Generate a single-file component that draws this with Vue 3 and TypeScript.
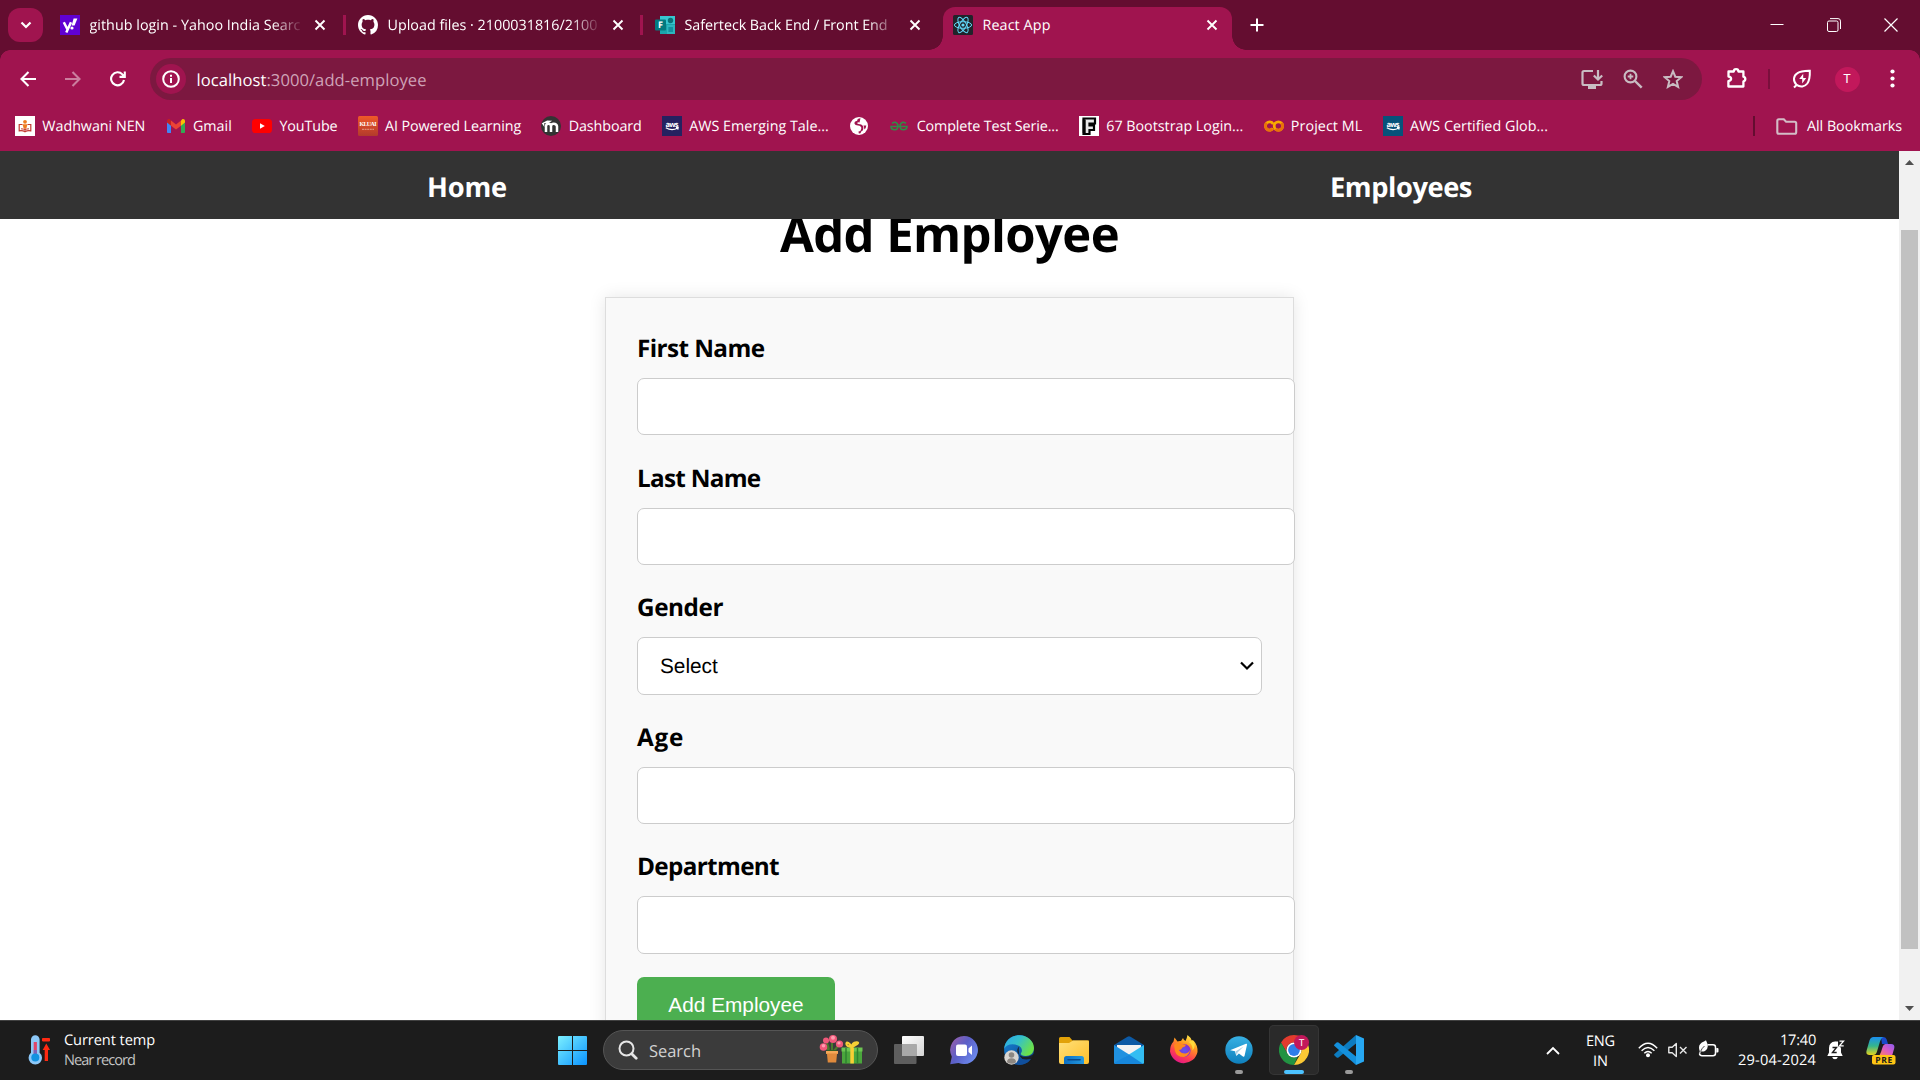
<script setup lang="ts">
import { ref } from 'vue'

interface Bookmark { icon: string; label?: string; width?: number }
interface Field { label: string; width: number; kind: 'text' | 'select' }
interface TaskApp { icon: string; state?: 'open' | 'active' }

// Spreads the glyphs of a label so that it takes exactly the given width.
const vFit = {
  mounted(el: HTMLElement, binding: { value?: number }) {
    if (!binding.value) return
    const natural = el.getBoundingClientRect().width
    const count = (el.textContent ?? '').trim().length
    el.style.letterSpacing = `${(binding.value - natural) / count}px`
  },
}

const gender = ref('')

const tabs = [
  { icon: 'yahoo', title: 'github login - Yahoo India Searc', width: 211 },
  { icon: 'github', title: 'Upload files · 2100031816/2100', width: 210 },
  { icon: 'forms', title: 'Saferteck Back End / Front End', width: 203 },
]

const bookmarks: Bookmark[] = [
  { icon: 'wadhwani', label: 'Wadhwani NEN', width: 103 },
  { icon: 'gmail', label: 'Gmail', width: 39 },
  { icon: 'youtube', label: 'YouTube', width: 58 },
  { icon: 'kluai', label: 'AI Powered Learning', width: 136 },
  { icon: 'moodle', label: 'Dashboard', width: 73 },
  { icon: 'awsNavy', label: 'AWS Emerging Tale...', width: 139.500 },
  { icon: 'globe' },
  { icon: 'gfg', label: 'Complete Test Serie...', width: 142 },
  { icon: 'bootF', label: '67 Bootstrap Login...', width: 137 },
  { icon: 'colab', label: 'Project ML', width: 71.500 },
  { icon: 'awsTeal', label: 'AWS Certified Glob...', width: 138 },
]

const fields: Field[] = [
  { label: 'First Name', width: 127.500, kind: 'text' },
  { label: 'Last Name', width: 123.500, kind: 'text' },
  { label: 'Gender', width: 86, kind: 'select' },
  { label: 'Age', width: 47, kind: 'text' },
  { label: 'Department', width: 142, kind: 'text' },
]

const apps: TaskApp[] = [
  { icon: 'taskview' },
  { icon: 'chat' },
  { icon: 'edge' },
  { icon: 'explorer' },
  { icon: 'mail' },
  { icon: 'firefox' },
  { icon: 'telegram', state: 'open' },
  { icon: 'chrome', state: 'active' },
  { icon: 'vscode', state: 'open' },
]

const aws = (bg: string) => `<rect width="20" height="20" fill="${bg}"/>
  <text x="10" y="10.5" text-anchor="middle" font-family="Open Sans, sans-serif" font-weight="700" font-size="7.5" textLength="13" fill="#fff">aws</text>
  <path d="M3.800 11.800q6 3.400 11.600.4M14 11.600l2.200-.1-.4 2.200" fill="none" stroke="#fff" stroke-width="1.200"/>`

// 20 x 20 site icons
const favicons: Record<string, string> = {
  yahoo: `<rect width="20" height="20" fill="#6001d2"/><path d="M3.800 7.200l3.600 7M11 7.200L6.300 17.500" stroke="#fff" stroke-width="2.500"/><path d="M13.600 3.600h3.800l-2.800 7h-3z" fill="#fff"/><circle cx="12" cy="13" r="1.600" fill="#fff"/>`,
  github: `<path transform="scale(1.25)" fill="#fff" d="M8 0C3.58 0 0 3.58 0 8c0 3.54 2.29 6.53 5.47 7.59.4.07.55-.17.55-.38 0-.19-.01-.82-.01-1.49-2.01.37-2.53-.49-2.69-.94-.09-.23-.48-.94-.82-1.13-.28-.15-.68-.52-.01-.53.63-.01 1.08.58 1.23.82.72 1.21 1.87.87 2.33.66.07-.52.28-.87.51-1.07-1.78-.2-3.64-.89-3.64-3.95 0-.87.31-1.59.82-2.15-.08-.2-.36-1.02.08-2.12 0 0 .67-.21 2.2.82.64-.18 1.32-.27 2-.27s1.36.09 2 .27c1.53-1.04 2.2-.82 2.2-.82.44 1.1.16 1.92.08 2.12.51.56.82 1.27.82 2.15 0 3.07-1.87 3.75-3.65 3.95.29.25.54.73.54 1.48 0 1.07-.01 1.93-.01 2.2 0 .21.15.46.55.38A8.01 8.01 0 0 0 16 8c0-4.42-3.58-8-8-8z"/>`,
  forms: `<path d="M5 1h15v18H5z" fill="#1aa5ab"/><path d="M5 1h15v8H5z" fill="#37c6d0"/><path d="M12 10h8v9h-8z" fill="#2cb6be"/><circle cx="15.5" cy="5.5" r="2.7" fill="#0b7177"/><rect x="13.4" y="12" width="4.6" height="5" fill="#1490a0"/><rect x="0" y="4.5" width="11" height="11" rx="1" fill="#037a7f"/><text x="5.5" y="13.4" text-anchor="middle" font-family="Open Sans, sans-serif" font-weight="700" font-size="9" fill="#fff">F</text>`,
  react: `<rect width="20" height="20" rx="1.5" fill="#20232a"/><g fill="none" stroke="#61dafb" stroke-width="1"><ellipse cx="10" cy="10" rx="8.6" ry="3.3"/><ellipse cx="10" cy="10" rx="8.6" ry="3.3" transform="rotate(60 10 10)"/><ellipse cx="10" cy="10" rx="8.6" ry="3.3" transform="rotate(120 10 10)"/></g><circle cx="10" cy="10" r="1.6" fill="#61dafb"/>`,
  wadhwani: `<rect width="20" height="20" fill="#fff"/><path d="M7.500 8.500H4.200v6.300q3.500-.6 5.800 1 2.300-1.600 5.800-1V8.500H12.500" fill="none" stroke="#c23a32" stroke-width="1.200"/><path d="M6 12.800q2.500 0 4 1 1.500-1 4-1M10 10v6" fill="none" stroke="#c23a32" stroke-width="1"/><circle cx="10" cy="5.800" r="1.900" fill="#ef7d22"/><path d="M7.500 8.200h5l-1.200 4.200H8.700z" fill="#ef7d22"/>`,
  gmail: `<path d="M1 5v11.2c0 .5.4.8.9.8H5V8.2L1 5z" fill="#4285f4"/><path d="M19 5v11.2c0 .5-.4.8-.9.8H15V8.2L19 5z" fill="#34a853"/><path d="M5 4.6v5.2l5 3.8 5-3.8V4.6l-5 3.8z" fill="#ea4335"/><path d="M15 4.6v5.2l4-3.2V5c0-2-2-2.6-3-1.6z" fill="#fbbc04"/><path d="M5 4.6v5.2L1 6.6V5c0-2 2-2.6 3-1.6z" fill="#c5221f"/>`,
  youtube: `<rect x="0" y="3" width="20" height="14" rx="3.6" fill="#f00"/><path d="M8 7.300l4.800 2.700L8 12.700z" fill="#fff"/>`,
  kluai: `<defs><linearGradient id="kl" x1="0" y1="0" x2="0" y2="1"><stop stop-color="#f05a28"/><stop offset="1" stop-color="#b23a2c"/></linearGradient></defs><rect width="20" height="20" rx="1.500" fill="url(#kl)"/><text x="10" y="10.300" text-anchor="middle" font-family="Liberation Serif, serif" font-weight="700" font-size="6" textLength="17" fill="#fff">KLUAI</text><path d="M4 13.300h12" stroke="#eca58c" stroke-width=".9" stroke-dasharray="2 .6"/>`,
  moodle: `<circle cx="10" cy="10" r="10" fill="#333"/><path d="M5 16V10.300q0-2.600 2.500-2.600t2.500 2.600V16M10 16V10.300q0-2.600 2.800-2.600t3.200 2.600V16" fill="none" stroke="#fff" stroke-width="2.500"/><path d="M.8 7.200l5.400-2.700 5 .3-4.400 2.600-3.500-.5v4" fill="#fff"/>`,
  awsNavy: aws('#252160'),
  awsTeal: aws('#06527a'),
  globe: `<circle cx="10" cy="10" r="9" fill="#fff"/><path d="M11.500 2.300q-3.500.2-3.300 2.500Q5 5.500 5.500 7.800q.5 1.700 3.500 1.700 3.500.3 3.300 3-.1 2.500-2.800 3l.3 2 1.700-.2q.2-2 2.500-3 .8-3-.2-4.500-1-1.800-4.300-1.800-1.700-.2-1.300-1.200.8-.8 2.300-.3z" fill="#a0144f"/><path d="M14.500 9.500h2.800q-.2 2.500-1.800 4z" fill="#a0144f"/>`,
  gfg: `<g fill="none" stroke="#2f8d46" stroke-width="1.600"><path d="M3 7.300q4-2.600 5.800 1.400.8 5-3.200 5-3.600 0-3.600-3.200h16q0 3.200-3.600 3.200-4 0-3.200-5Q13 4.700 17 7.300"/></g>`,
  bootF: `<rect width="20" height="20" fill="#fff"/><path d="M4.500 2.500H16V7.500H10.500v2H15v4.500h-4.500v4h-6z" fill="#e8e8e8" stroke="#050505" stroke-width="2.200"/><path d="M5.200 3.500v13.500" stroke="#050505" stroke-width="3"/>`,
  colab: `<g fill="none" stroke-width="2.800"><circle cx="5.600" cy="10" r="4.100" stroke="#f9ab00" stroke-dasharray="20.500 5.300" stroke-dashoffset="-2.600"/><circle cx="14.400" cy="10" r="4.200" stroke="#f9ab00"/><path d="M11.400 13A4.200 4.200 0 0 0 17.400 7" stroke="#e8710a"/><path d="M8.500 12.900A4.100 4.100 0 0 1 2.700 7.100" stroke="#e8710a"/></g>`,
}

// 30 x 30 taskbar icons
const appIcons: Record<string, string> = {
  taskview: `<defs><linearGradient id="tv" x1="0" y1="0" x2="1" y2="1"><stop stop-color="#fff"/><stop offset="1" stop-color="#d4d4d4"/></linearGradient></defs><rect x="8" y="1" width="22" height="20" rx="1" fill="url(#tv)"/><rect x="0" y="9" width="22.500" height="20" rx="1" fill="#666" fill-opacity=".9"/><rect x="8" y="9" width="14.500" height="12" fill="#a9a9a9"/>`,
  chat: `<defs><linearGradient id="ch" x1="0" y1="0" x2="1" y2=".7"><stop stop-color="#a35fa6"/><stop offset=".5" stop-color="#5b5fc7"/><stop offset="1" stop-color="#6d8cf0"/></linearGradient></defs><path d="M15 1a14 14 0 1 1-5.500 26.900L1.200 29.200l1.600-7.500A14 14 0 0 1 15 1z" fill="url(#ch)"/><rect x="7" y="9.500" width="11" height="11.500" rx="2" fill="#fff"/><path d="M19.500 13.500l3.500-3v9.500l-3.500-3z" fill="#fff"/>`,
  edge: `<defs><linearGradient id="e1" x1="0" y1="0" x2="1" y2=".5"><stop stop-color="#2ba7ec"/><stop offset=".5" stop-color="#35c1c9"/><stop offset="1" stop-color="#6be14a"/></linearGradient><linearGradient id="e2" x1="0" y1="0" x2="1" y2="1"><stop stop-color="#1785d8"/><stop offset="1" stop-color="#0c3f86"/></linearGradient></defs><circle cx="15" cy="15" r="14.900" fill="url(#e2)"/><path d="M.2 14C.8 5.500 7.500.2 15.200.2 23.500.2 30 6 30 13c0 5-3.500 8-8.300 8-4 0-5.600-1.600-4.600-3 1.600-2.300.9-5.600-2.400-7.300C8.500 7.700 2 9.500.2 14z" fill="url(#e1)"/><path d="M15.500 11.500a5 5 0 0 0-2 5.500c1.400 5 8.500 6 14 3.200l2.500-1.500q0 3-3 7c-6 .8-11.300-2-12-7.200-.3-3.500-.5-6 .5-7z" fill="#1c1c1c" fill-opacity=".9"/><path d="M12 17.500c.8 5.500 6 8 15 6.400-2.500 3.700-7 5.900-12 5.900C8 28 7 21 12 17.500z" fill="#104f9c"/><circle cx="7.500" cy="22.500" r="7.200" fill="#d8d5d1"/><circle cx="7.500" cy="20" r="2.800" fill="#8c8782"/><path d="M3 27.300q0-4 4.500-4t4.500 4q-4 3-9 0z" fill="#8c8782"/>`,
  explorer: `<defs><linearGradient id="fx" x1="0" y1="0" x2="1" y2="1"><stop stop-color="#ffe07a"/><stop offset="1" stop-color="#ffbf29"/></linearGradient><linearGradient id="fb" x1="0" y1="0" x2="1" y2="0"><stop stop-color="#0c6fc4"/><stop offset="1" stop-color="#2599dd"/></linearGradient></defs><path d="M0 3.500Q0 2 1.500 2h9l3 3.500H30V12H0z" fill="#e2a208"/><path d="M0 8h10l4-2.500h14.500q1.500 0 1.500 1.500v20q0 2-2 2H2q-2 0-2-2z" fill="url(#fx)"/><path d="M5 29v-5.500q0-2.500 2.500-2.500h15q2.500 0 2.500 2.500V29z" fill="url(#fb)"/><path d="M9 24.800h12" stroke="#0a4a8c" stroke-width="1.600" stroke-linecap="round"/>`,
  mail: `<path d="M0 10L13.500 1.800q1.500-1 3 0L30 10v5H0z" fill="#0c59a4"/><path d="M3 10h24v12H3z" fill="#f2f2f2"/><path d="M0 10l19 12-16 7H1.500Q0 29 0 27.500z" fill="#2091e0"/><path d="M30 10L11 22l-9.500 7h27q1.500 0 1.500-1.500z" fill="#33bdf2"/><path d="M0 28L15 19.500l14 9.200q-.3.300-1 .300H2z" fill="#1787dc"/>`,
  firefox: `<defs><linearGradient id="ff" x1=".8" y1="0" x2=".3" y2="1"><stop stop-color="#fff44f"/><stop offset=".35" stop-color="#ff9a1f"/><stop offset=".7" stop-color="#ff4050"/><stop offset="1" stop-color="#e31587"/></linearGradient><radialGradient id="fp"><stop stop-color="#5a5bf0"/><stop offset="1" stop-color="#8a2bd0"/></radialGradient></defs><path d="M4.500 6.500l1-4 3 4q1.500-.8 3.500-.5l2-3q.5 2 2.500 3 1.500-3 2-6 3 2 4.500 6l1.500-.5q4.500 5 4 11.500A14 14 0 0 1 1 16.500Q1 10 4.500 6.500z" fill="url(#ff)"/><circle cx="15.200" cy="15.500" r="6.400" fill="url(#fp)"/><path d="M5 10q4-3.500 8-1l4 .8q-.5 2.200-3.500 2.700-1 2.500-3.500 2.500 2 3.800 6.500 3.500 3.500-.5 4.500-4-.2 6-6 7.500-7.500 0-9-6z" fill="#ff8a1c"/><path d="M20 7q4 3 3.500 8.500Q28 10 23.500 5z" fill="#ffd93b"/>`,
  telegram: `<defs><linearGradient id="tg" x1="0" y1="0" x2="0" y2="1"><stop stop-color="#38b0e3"/><stop offset="1" stop-color="#0f80bd"/></linearGradient></defs><circle cx="15" cy="15" r="13.700" fill="url(#tg)"/><path d="M6 15.300L22 8.800q1.300-.4 1 1L20.500 21q-.4 1.300-1.600.5l-4-3-2 2q-.7.600-.9-.6l-1-3.700-4.500-1z" fill="#fff"/><path d="M11.500 16.500l8-5-6 6-.6 3z" fill="#a9cfe4"/>`,
  chrome: `<path d="M15 0a15 15 0 0 1 13 7.500H15A7.500 7.500 0 0 0 8.500 18.800L2 7.500A15 15 0 0 1 15 0z" fill="#e33b2e"/><path d="M2 7.500l6.500 11.300a7.500 7.500 0 0 0 10.200 2.600L15 30A15 15 0 0 1 2 7.500z" fill="#229342"/><path d="M28 7.500A15 15 0 0 1 15 30l6.500-11.300A7.500 7.500 0 0 0 15 7.500z" fill="#fcc934"/><circle cx="15" cy="15" r="7.500" fill="#fff"/><circle cx="15" cy="15" r="5.900" fill="#2f7de9"/><circle cx="22.500" cy="7.500" r="7.500" fill="#c2185b"/><text x="22.500" y="11" text-anchor="middle" font-family="Roboto, sans-serif" font-size="9.500" fill="#fff">T</text>`,
  vscode: `<path d="M22 0v8.500L4.500 22.500q-1 .7-1.900 0L.5 20.600q-.9-.9 0-1.700z" fill="#0d7cc0"/><path d="M22 30v-8.500L4.500 7.500q-1-.7-1.900 0L.5 9.400q-.9.900 0 1.700z" fill="#1490dc"/><path d="M22 0l8 3.500v23L22 30z" fill="#27a8f2"/>`,
}
</script>

<template>
  <div class="screen">
    <header class="tabstrip">
      <button class="tab-search" aria-label="Search tabs">
        <svg width="12" height="8" viewBox="0 0 12 8"><path d="M1.500 1.500L6 6l4.500-4.500" fill="none" stroke="#fff" stroke-width="2.200" /></svg>
      </button>
      <div v-for="tab in tabs" :key="tab.icon" class="tab" :class="tab.icon">
        <svg class="fav" viewBox="0 0 20 20" v-html="favicons[tab.icon]"></svg>
        <span class="tab-title fade"><span v-fit="tab.width" class="t">{{ tab.title }}</span></span>
        <svg class="x" viewBox="0 0 12 12"><path d="M1.500 1.500l9 9m0-9l-9 9" /></svg>
      </div>
      <div class="tab active">
        <svg class="fav" viewBox="0 0 20 20" v-html="favicons.react"></svg>
        <span class="tab-title"><span v-fit="68" class="t">React App</span></span>
        <svg class="x" viewBox="0 0 12 12"><path d="M1.500 1.500l9 9m0-9l-9 9" /></svg>
      </div>
      <svg class="plus" viewBox="0 0 14 14"><path d="M7 .5v13M.5 7h13" fill="none" stroke="#fff" stroke-width="2" /></svg>
      <div class="window-controls">
        <svg width="14" height="14" viewBox="0 0 14 14"><path d="M.5 6.500h13" stroke="#fff" /></svg>
        <svg width="14" height="14" viewBox="0 0 14 14" fill="none" stroke="#fff"><rect x=".5" y="3" width="10.500" height="10.500" rx="1.500" /><path d="M3 .6h8q2.500 0 2.500 2.500V11" /></svg>
        <svg width="14" height="14" viewBox="0 0 14 14"><path d="M.5.5l13 13m0-13l-13 13" stroke="#fff" stroke-width="1.200" /></svg>
      </div>
    </header>

    <div class="chrome-body">
      <div class="toolbar">
        <svg class="nav-ic" viewBox="0 0 16 16"><path d="M16 8H2M8.500 1L1.500 8l7 7" /></svg>
        <svg class="nav-ic dim" viewBox="0 0 16 16"><path d="M0 8h14M7.500 1l7 7-7 7" /></svg>
        <svg class="nav-ic" viewBox="0 0 16 16"><path d="M14 9a6.500 6.500 0 1 1-1.600-5.600L14.500 5.500M14.800.5v5.400H9.500" /></svg>
        <div class="omnibox">
          <span class="site-info">
            <svg width="18" height="18" viewBox="0 0 18 18"><circle cx="9" cy="9" r="7.800" fill="none" stroke="#fff" stroke-width="2" /><path d="M9 8v5M9 4.800v2" stroke="#fff" stroke-width="2" /></svg>
          </span>
          <span v-fit="230" class="url"><b>localhost</b>:3000/add-employee</span>
          <div class="omni-icons">
            <svg width="22" height="20" viewBox="0 0 22 20" fill="none" stroke="#c9bcc2" stroke-width="2.200"><path d="M12 2H3q-1.500 0-1.500 1.500v11Q1.500 16 3 16h16q1.500 0 1.500-1.500V12" /><path d="M17 1v9M12.800 6.500L17 10.500l4.200-4" /><path d="M7 18.500h8" stroke-width="3" /></svg>
            <svg width="20" height="20" viewBox="0 0 20 20" fill="none" stroke="#c9bcc2" stroke-width="2.100"><circle cx="7.500" cy="7.500" r="5.900" /><path d="M12 12l6.700 6.700" stroke-width="2.400" /><path d="M7.500 4.700v5.600M4.700 7.500h5.600" stroke-width="1.800" /></svg>
            <svg width="20" height="20" viewBox="0 0 20 20"><path d="M10 2.200l2.300 5.500 6 .5-4.600 3.900 1.400 5.800L10 14.800l-5.100 3.100 1.400-5.800-4.600-3.900 6-.5z" fill="none" stroke="#c9bcc2" stroke-width="2" /></svg>
          </div>
        </div>
        <svg class="puzzle" width="22" height="22" viewBox="0 0 22 22"><path d="M2.500 4.500h5.300a2.300 2.300 0 0 1 4.600 0h5v5.200a2.400 2.400 0 0 1 0 4.700v5.100h-15v-5.300q2.700-.5 2.700-2.400T2.500 9.600z" fill="none" stroke="#fff" stroke-width="2.300" stroke-linejoin="round" /></svg>
        <span class="vsep"></span>
        <svg class="leaf" width="20" height="20" viewBox="0 0 20 20" fill="none" stroke="#fff" stroke-width="2"><path d="M2 18.500l2.600-2.600C.5 12 1.500 6.500 5.500 4.200 9 2 13 2 17.800 1.800c.2 5.200 0 9.200-2.500 12.700-2.500 3.300-7 4-10.700 1.400" /><path d="M11.200 4.800l-4 5.200h3v4.500l4-5.500h-3z" fill="#fff" stroke="none" /></svg>
        <span class="avatar">T</span>
        <svg class="dots" width="5" height="20" viewBox="0 0 5 20" fill="#fff"><circle cx="2.500" cy="2.500" r="2.100" /><circle cx="2.500" cy="9.500" r="2.100" /><circle cx="2.500" cy="16.500" r="2.100" /></svg>
      </div>

      <div class="bookmarks">
        <div v-for="b in bookmarks" :key="b.icon" class="bookmark">
          <svg class="fav" viewBox="0 0 20 20" v-html="favicons[b.icon]"></svg>
          <span v-if="b.label" v-fit="b.width" class="t">{{ b.label }}</span>
        </div>
        <div class="all">
          <span class="bsep"></span>
          <svg width="22" height="17" viewBox="0 0 22 17"><path d="M1.300 2.800Q1.300 1.300 2.800 1.300h5l2.300 2.400h8.600q1.500 0 1.500 1.500v9q0 1.500-1.500 1.500H2.800q-1.500 0-1.500-1.500z" fill="none" stroke="#d3bcc6" stroke-width="2.100" /></svg>
          <span v-fit="95" class="t">All Bookmarks</span>
        </div>
      </div>
    </div>

    <div class="viewport">
      <div class="page">
        <nav class="site-nav">
          <a><span v-fit="80">Home</span></a>
          <a><span v-fit="142">Employees</span></a>
        </nav>
        <h1><span v-fit="339">Add Employee</span></h1>
        <form class="card" @submit.prevent>
          <div v-for="f in fields" :key="f.label" class="field">
            <label><span v-fit="f.width">{{ f.label }}</span></label>
            <input v-if="f.kind === 'text'" type="text" />
            <div v-else class="select">
              <span>{{ gender || 'Select' }}</span>
              <svg width="14" height="10" viewBox="0 0 14 10"><path d="M1 1.500l6 6 6-6" fill="none" stroke="#000" stroke-width="2.200" /></svg>
            </div>
          </div>
          <button type="submit" class="submit">Add Employee</button>
        </form>
      </div>
      <div class="scrollbar">
        <svg width="9" height="5" viewBox="0 0 9 5"><path d="M4.500 0L9 5H0z" fill="#505050" /></svg>
        <div class="thumb"></div>
        <svg class="down" width="9" height="5" viewBox="0 0 9 5"><path d="M4.500 5L9 0H0z" fill="#505050" /></svg>
      </div>
    </div>

    <footer class="taskbar">
      <div class="weather">
        <svg width="24" height="30" viewBox="0 0 24 30"><path d="M3 4.500a4.300 4.300 0 0 1 8.600 0v13.200a6.700 6.700 0 1 1-8.600 0z" fill="#8cc8f8" /><path d="M5.700 7h3.200v14H5.700z" fill="#e0456a" /><path d="M5.700 15h3.200v6H5.700z" fill="#7a62b8" /><circle cx="7.300" cy="22.500" r="4" fill="#1292e0" /><path d="M14.500 3.500h7v2.500h-7z" fill="#ff2a12" stroke="#ff2a12" stroke-linejoin="round" /><path d="M18.300 8.500l3.700 6.500h-2v11h-3.300V15h-2z" fill="#ff2a12" /></svg>
        <div class="two-line">
          <span v-fit="91" class="bright">Current temp</span>
          <span v-fit="80" class="muted">Near record</span>
        </div>
      </div>

      <svg class="start" width="29" height="29" viewBox="0 0 29 29"><defs><linearGradient id="wg" x1="0" y1="0" x2="29" y2="29" gradientUnits="userSpaceOnUse"><stop stop-color="#7cf0ff" /><stop offset="1" stop-color="#0a93ff" /></linearGradient></defs><path d="M0 1Q0 0 1 0h13v14H0zM15 0h13q1 0 1 1v13H15zM0 15h14v14H1q-1 0-1-1zM15 15h14v13q0 1-1 1H15z" fill="url(#wg)" /></svg>
      <div class="search">
        <svg width="20" height="20" viewBox="0 0 20 20" fill="none" stroke="#e6e6e6"><circle cx="8.500" cy="8.500" r="7" stroke-width="2" /><path d="M13.700 13.700l4.500 4.500" stroke-width="2.800" stroke-linecap="round" /></svg>
        <span v-fit="52" class="search-text">Search</span>
        <svg class="gift" width="44" height="30" viewBox="0 0 44 30">
          <g fill="none" stroke="#4a7a2c" stroke-width="2"><path d="M13 17V8M12 17L5 11M14 17l6-7M10 14l-2-6" /></g>
          <path d="M8 15h10l-2 3h-6z" fill="#355f22" />
          <g fill="#f0597a"><circle cx="4.500" cy="12" r="3.800" /><circle cx="14" cy="4" r="4" /><circle cx="20.500" cy="9" r="3.600" /><circle cx="7" cy="5.500" r="3" /></g>
          <g fill="#ff9bb0"><circle cx="4.500" cy="10.800" r="1.800" /><circle cx="14" cy="2.700" r="2" /><circle cx="20" cy="8" r="1.600" /></g>
          <path d="M7 16h12v3h-1l-.8 8.500H8.800L8 19H7z" fill="#e08a3c" /><path d="M7 16h12v2.500H7z" fill="#f5a758" />
          <path d="M23 13h20v15.500H23z" fill="#4aa63c" /><path d="M22.500 12.500h21v4h-21z" fill="#6cc552" /><path d="M27 13v15.500M38.500 13v15.500" stroke="#2f8230" stroke-width="1.500" />
          <path d="M31.300 12.500h3.600v16h-3.600z" fill="#f7cf35" />
          <path d="M33 12q-6-.5-5.500-3.500T33 12q0-4 4.500-4.500T33 12" fill="none" stroke="#f7cf35" stroke-width="2.300" />
        </svg>
      </div>
      <div class="apps">
        <div v-for="a in apps" :key="a.icon" class="app" :class="a.state">
          <svg width="30" height="30" viewBox="0 0 30 30" v-html="appIcons[a.icon]"></svg>
          <i v-if="a.state" class="indicator"></i>
        </div>
      </div>

      <div class="tray">
        <svg class="chev" width="14" height="9" viewBox="0 0 14 9"><path d="M1 8l6-6 6 6" fill="none" stroke="#fff" stroke-width="1.800" /></svg>
        <div class="two-line lang"><span v-fit="29">ENG</span><span v-fit="15">IN</span></div>
        <svg class="wifi" width="20" height="16" viewBox="0 0 20 16" fill="none" stroke="#fff" stroke-width="1.400"><path d="M.8 6.200Q10-3.800 19.200 6.200M3.600 8.800q6.400-6.600 12.800 0M6.300 11.200q3.700-3.600 7.400 0" /><circle cx="10" cy="13.200" r="2" fill="#fff" stroke="none" /></svg>
        <svg class="mute" width="20" height="16" viewBox="0 0 20 16" fill="none" stroke="#e8e8e8" stroke-width="1.400"><path d="M.8 5.200h3.400L8.300 1.500v13L4.200 10.800H.8z" stroke-linejoin="round" /><path d="M12 5l6.500 6.500m0-6.500L12 11.500" /></svg>
        <svg class="battery" width="21" height="18" viewBox="0 0 21 18"><path d="M9.500 4.700h5.500q2.500 0 2.500 2.500v6q0 2.500-2.500 2.500H4q-2.200 0-2.500-2" fill="none" stroke="#fff" stroke-width="1.500" /><path d="M18.300 8h1.200q1 0 1 1v2.500q0 1-1 1h-1.200z" fill="#fff" /><path d="M1 13.500l.8-2Q-1 4 6 1.500L8 .3q4 8-1 10.700-2.500 1-4 .3l-1 2.700z" fill="#fff" /><path d="M2.500 11.500Q4 8 6.500 6" fill="none" stroke="#1c1c1c" stroke-width=".8" /></svg>
        <div class="two-line clock"><span v-fit="36">17:40</span><span v-fit="78">29-04-2024</span></div>
        <svg class="bell" width="18" height="20" viewBox="0 0 18 20"><path d="M8 1.500q-5.800.5-6 6.500v4.500L.3 16h15.400L14 12.500V9" fill="#fff" /><path d="M8 1.500h4L14 9v4H8z" fill="#fff" /><path d="M5.200 17h5.600q-.5 2.300-2.800 2.300T5.200 17z" fill="#fff" /><path d="M5.500 7.500h4l-4 5h4.200" fill="none" stroke="#1c1c1c" stroke-width="1.400" /><path d="M11 0h7v6.500h-7z" fill="#1c1c1c" /><path d="M12.500 1.200h4l-4 4.600h4.200" fill="none" stroke="#fff" stroke-width="1.300" /></svg>
        <svg class="copilot" width="30" height="29" viewBox="0 0 30 29">
          <defs>
            <linearGradient id="c1" x1="0" y1="0" x2="0" y2="1"><stop stop-color="#1a8ff0" /><stop offset=".5" stop-color="#35b58c" /><stop offset="1" stop-color="#e6d41c" /></linearGradient>
            <linearGradient id="c2" x1="1" y1="0" x2="0" y2="1"><stop stop-color="#8b5cf0" /><stop offset=".5" stop-color="#dc5cc4" /><stop offset="1" stop-color="#ff8a4c" /></linearGradient>
          </defs>
          <path d="M15 1h2.500q2.500 0 3.200 2.500L22 8h-6z" fill="#1a49c8" />
          <path d="M7.500 1H17q-2 1-3 4.500l-3 10Q10 19 7 19H3.500Q-.5 19 .6 14.500L3.500 4.500Q4.500 1 7.500 1z" fill="url(#c1)" />
          <path d="M19.500 8H25q4 0 3.300 4L26 20H12q2-.5 3-4l1.800-5.500Q17.500 8 19.500 8z" fill="url(#c2)" />
          <rect x="6" y="19" width="23.500" height="9.500" rx="2" fill="#ffc514" />
          <text x="17.800" y="26.800" text-anchor="middle" font-family="Open Sans, sans-serif" font-weight="700" font-size="8.500" textLength="17" fill="#1a1a1a">PRE</text>
        </svg>
      </div>
    </footer>
  </div>
</template>

<style>
body { margin: 0; overflow: hidden; }
</style>

<style scoped>
.screen {
  width: 1920px;
  height: 1080px;
  display: flex;
  flex-direction: column;
  overflow: hidden;
  background: #fff;
  font-family: 'Open Sans', 'Noto Sans', sans-serif;
  text-rendering: geometricPrecision;
  color: #fff;
}
svg { display: block; flex: none; }
span { white-space: nowrap; }
button { border: 0; padding: 0; }
.fav { width: 20px; height: 20px; }
.t { display: block; width: max-content; font-size: 14.300px; line-height: 20px; }

/* tab strip */
.tabstrip { height: 50px; flex: none; display: flex; align-items: center; background: #640d30; }
.tab-search {
  width: 35px; height: 34px; margin-left: 8px; border-radius: 12px; background: #a0144f;
  display: flex; align-items: center; justify-content: center; flex: none;
}
.tab { display: flex; align-items: center; height: 50px; box-sizing: border-box; flex: none; }
.tab.yahoo, .tab.github {
  background: linear-gradient(#a0144f, #a0144f) right center / 3px 20px no-repeat;
}
.tab.yahoo { width: 303px; padding-left: 17px; }
.tab.github { width: 297px; padding-left: 12px; }
.tab.forms { width: 300px; padding-left: 12px; }
.tab-title { margin-left: 9.500px; width: 212px; flex: none; height: 22px; margin-top: 3px; }
.fade { -webkit-mask-image: linear-gradient(90deg, #000 182px, transparent 214px); mask-image: linear-gradient(90deg, #000 182px, transparent 214px); }
.forms .tab-title { width: 206px; }
.x { width: 12px; height: 12px; margin-left: 12px; }
.x path { fill: none; stroke: #fff; stroke-width: 1.900; }
.forms .x { margin-left: 18px; }
.tab.active {
  position: relative; width: 289px; height: 43px; margin-top: 7px; padding: 0 0 7px 10px;
  border-radius: 12px 12px 0 0; background: #a0144f;
}
.active .x { margin-left: 11.500px; }
.tab.active::before, .tab.active::after {
  content: ''; position: absolute; bottom: 0; width: 14px; height: 14px;
}
.tab.active::before { left: -14px; background: radial-gradient(circle at 0 0, transparent 13.500px, #a0144f 14px); }
.tab.active::after { right: -14px; background: radial-gradient(circle at 100% 0, transparent 13.500px, #a0144f 14px); }
.plus { width: 14px; height: 14px; margin-left: 18px; }
.window-controls { margin-left: auto; margin-right: 22px; display: flex; gap: 43px; }

/* toolbar */
.chrome-body {
  height: 101px; flex: none; box-sizing: border-box;
  background:
    radial-gradient(circle at 10px 10px, #a0144f 9.500px, #640d30 10px) 0 0 / 10px 10px no-repeat,
    radial-gradient(circle at 0 10px, #a0144f 9.500px, #640d30 10px) 100% 0 / 10px 10px no-repeat,
    #a0144f;
}
.toolbar { height: 58px; padding-left: 19.500px; display: flex; align-items: center; }
.nav-ic { width: 16px; height: 16px; margin-right: 29px; }
.nav-ic path { fill: none; stroke: #fff; stroke-width: 2.100; }
.nav-ic.dim { opacity: .45; }
.omnibox {
  width: 1552px; height: 42px; margin-left: -4.500px; border-radius: 21px; background: #7c1840;
  display: flex; align-items: center; flex: none;
}
.site-info {
  width: 30px; height: 30px; margin-left: 6px; border-radius: 50%; background: #a0144f;
  display: flex; align-items: center; justify-content: center;
}
.url { margin-left: 10.500px; margin-top: 1px; font-size: 16.600px; line-height: 24px; color: #cfa3b7; display: inline-block; }
.url b { font-weight: 400; color: #fff; }
.omni-icons { margin-left: auto; margin-right: 19.500px; display: flex; align-items: center; gap: 20px; }
.puzzle { margin-left: 23.500px; margin-top: -2px; }
.vsep { width: 2px; height: 20px; background: #7a0f3c; margin-left: 20px; }
.leaf { margin-left: 22.500px; }
.avatar {
  width: 25px; height: 25px; margin-left: 22.500px; border-radius: 50%; background: #c2185b;
  font: 12.500px/25px Roboto, sans-serif; text-align: center;
}
.dots { margin-left: 30px; }

/* bookmarks */
.bookmarks { height: 36px; padding: 0 18px 0 15px; display: flex; align-items: center; gap: 20.300px; }
.bookmark { display: flex; align-items: center; gap: 7.300px; }
.bookmarks .t { margin-top: 1px; }
.all { margin-left: auto; display: flex; align-items: center; }
.bsep { width: 2px; height: 20px; background: #640d30; margin-right: 21px; }
.all .t { margin-left: 9px; }

/* page */
.viewport { height: 869px; display: flex; flex: none; overflow: hidden; }
.page { width: 1899px; height: 869px; overflow: hidden; color: #000; }
.site-nav {
  position: relative; z-index: 2; height: 68px; background: #333; color: #fff;
  display: flex; justify-content: space-between; padding: 0 427px;
}
.site-nav a { font-size: 27.300px; font-weight: 700; line-height: 71px; }
.site-nav span, label span, h1 span, .two-line span, .search-text { display: inline-block; }
h1 { margin: -15.500px 0 33.500px; height: 60px; font-size: 49px; line-height: 60px; text-align: center; font-weight: 700; }
.card {
  width: 689px; height: 800px; margin: 0 auto; box-sizing: border-box; padding: 32px 32px 0 31px;
  border: 1px solid #ddd; background: #f9f9f9; box-shadow: 0 0 16px rgba(0, 0, 0, .1);
}
.field { height: 129.500px; }
label { display: block; height: 34px; margin-bottom: 14.200px; font-size: 24.300px; line-height: 37.500px; font-weight: 700; }
input {
  display: block; width: 658px; height: 57.200px; box-sizing: border-box; margin: 0; padding: 0 22px;
  border: 1px solid #ccc; border-radius: 7px; background: #fff; outline: 0;
}
.field:nth-of-type(5) input { height: 57.800px; }
.select {
  width: 625px; height: 57.800px; box-sizing: border-box; padding: 0 7px 0 22px; border: 1px solid #ccc;
  border-radius: 7px; background: #fff; display: flex; align-items: center; justify-content: space-between;
  font: 20.800px/24px 'Liberation Sans', Arial, sans-serif;
}
.select span { padding-top: 1px; }
.submit {
  display: block; width: 198px; height: 56px; margin-top: -.5px; border-radius: 7px; background: #4caf50; color: #fff;
  font: 20.800px/56px 'Liberation Sans', Arial, sans-serif;
}
.scrollbar { width: 21px; background: #f1f1f1; display: flex; flex-direction: column; align-items: center; }
.scrollbar svg { margin-top: 9px; }
.thumb { width: 17px; height: 719px; margin-top: 65px; background: #c1c1c1; }
.scrollbar .down { margin-top: 57px; }

/* taskbar */
.taskbar { height: 60px; flex: none; box-sizing: border-box; padding-bottom: 1px; background: #1c1c1c; border-top: 1px solid #414141; display: flex; align-items: center; }
.weather { width: 530px; margin-left: 28px; display: flex; align-items: center; gap: 12px; flex: none; }
.two-line { display: flex; flex-direction: column; margin-top: -1px; font-size: 14.600px; line-height: 20px; }
.muted { color: #c4c4c4; }
.search {
  width: 275px; height: 40px; margin-left: 16px; box-sizing: border-box; border: 1px solid #555; border-radius: 20px;
  background: #3b3b3b; display: flex; align-items: center; padding: 0 14px; flex: none;
}
.search-text { margin-left: 11px; margin-top: 1px; font-size: 16.500px; line-height: 24px; color: #d2d2d2; }
.gift { margin-left: auto; }
.apps { display: flex; margin-left: 3.500px; }
.app { position: relative; width: 50px; height: 50px; margin: 0 2.500px; display: flex; align-items: center; justify-content: center; }
.app.active { background: #2a2a2a; border-radius: 5px; box-shadow: inset 0 0 0 1px #353535; }
.indicator { position: absolute; bottom: 1px; left: 21px; width: 8px; height: 4px; border-radius: 2px; background: #9a9a9a; }
.active .indicator { left: 15px; width: 20px; background: #4cc2ff; }
.tray { margin-left: auto; margin-right: 24px; display: flex; align-items: center; }
.lang { align-items: center; margin-left: 26.500px; margin-top: 1px; }
.wifi { margin-left: 23px; }
.mute { margin-left: 10px; }
.battery { margin-left: 10px; margin-top: -3px; }
.clock { margin-left: 19px; align-items: flex-end; }
.bell { margin-left: 11px; }
.copilot { margin-left: 21px; }
</style>
